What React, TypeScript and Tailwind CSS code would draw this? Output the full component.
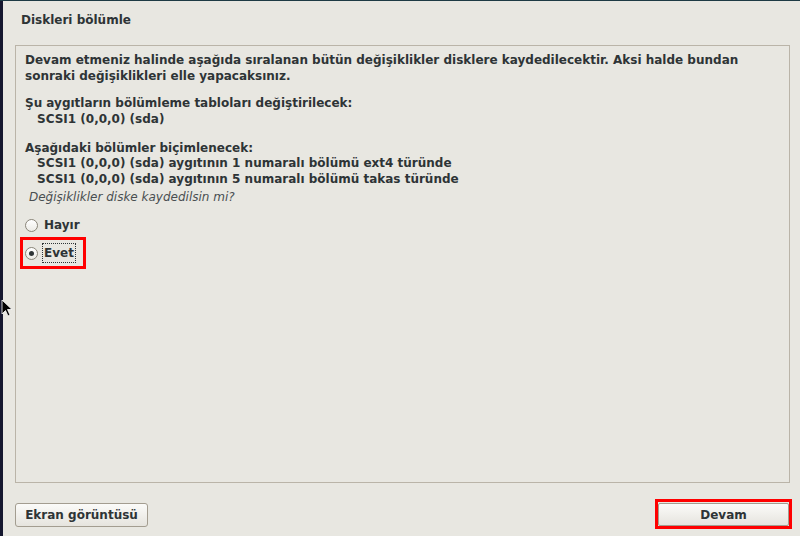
import React from 'react'

const font = { fontFamily: '"DejaVu Sans", sans-serif' }

function Radio({ checked }: { checked?: boolean }) {
  return (
    <span className="relative flex h-[13px] w-[13px] items-center justify-center rounded-full border border-[#8a8579] bg-gradient-to-b from-[#ffffff] to-[#ecebe6]">
      {checked && <span className="h-[5px] w-[5px] rounded-full bg-[#2e3436]" />}
    </span>
  )
}

export default function App() {
  return (
    <div className="relative h-[536px] w-[800px] overflow-hidden bg-[#e8e7e1] text-[#2e3436]" style={font}>
      {/* desktop edges behind the window */}
      <div className="absolute left-0 top-0 h-full w-[3px] bg-[#15172f]" />
      <div className="absolute left-0 top-0 h-[1px] w-full bg-[#1d3a44]" />

      <div className="flex h-full flex-col pl-[15px] pr-[10px]">
        <div className="flex h-[45px] items-center pb-[5px] pl-[6px] text-[12px] font-bold">Diskleri bölümle</div>

        <div className="flex-1 border border-[#bab4a8] pl-[9px] pt-[6px] text-[12px] leading-[16px]">
          <div className="font-bold">
            <p>Devam etmeniz halinde aşağıda sıralanan bütün değişiklikler disklere kaydedilecektir. Aksi halde bundan</p>
            <p>sonraki değişiklikleri elle yapacaksınız.</p>
            <p className="mt-[11px]">Şu aygıtların bölümleme tabloları değiştirilecek:</p>
            <p className="pl-[12px]">SCSI1 (0,0,0) (sda)</p>
            <p className="mt-[13px]">Aşağıdaki bölümler biçimlenecek:</p>
            <p className="-mt-[1px] pl-[12px]">SCSI1 (0,0,0) (sda) aygıtının 1 numaralı bölümü ext4 türünde</p>
            <p className="pl-[12px]">SCSI1 (0,0,0) (sda) aygıtının 5 numaralı bölümü takas türünde</p>
          </div>
          <p className="mt-[2px] pl-[4px] text-[12px] italic text-[#4a4f51]">Değişiklikler diske kaydedilsin mi?</p>

          <div className="mt-[6px] flex h-[28px] items-center gap-[6px] text-[12px] font-bold">
            <Radio />
            <span>Hayır</span>
          </div>
          <div className="-ml-[5px] -mt-[2px] flex h-[32px] w-[66px] items-center gap-[4px] border-[3px] border-[#ff0000] pl-[2px] text-[12px] font-bold">
            <Radio checked />
            <span className="flex h-[20px] w-[34px] items-center border border-dotted border-[#2e3436] pl-[1px]">Evet</span>
          </div>
        </div>

        <div className="flex h-[53px] items-end justify-between pb-[7px]">
          <button className="mb-[2px] h-[24px] w-[133px] rounded-[3px] border border-[#a39d90] bg-gradient-to-b from-[#fbfbf9] to-[#e6e4de] text-[12px] font-bold">
            Ekran görüntüsü
          </button>
          <div className="-mr-[2px] border-[3px] border-[#ff0000]">
            <button className="h-[23px] w-[131px] rounded-[2px] border border-[#a39d90] bg-gradient-to-b from-[#fbfbf9] to-[#e6e4de] text-[12px] font-bold">
              Devam
            </button>
          </div>
        </div>
      </div>

      {/* mouse pointer */}
      <svg className="absolute left-[1px] top-[299px]" width="12" height="20" viewBox="0 0 12 20">
        <path d="M1 1 L1 15 L4.5 11.5 L7 17 L9 16 L6.5 10.5 L11 10.5 Z" fill="#000" stroke="#fff" strokeWidth="0.8" />
      </svg>
    </div>
  )
}
